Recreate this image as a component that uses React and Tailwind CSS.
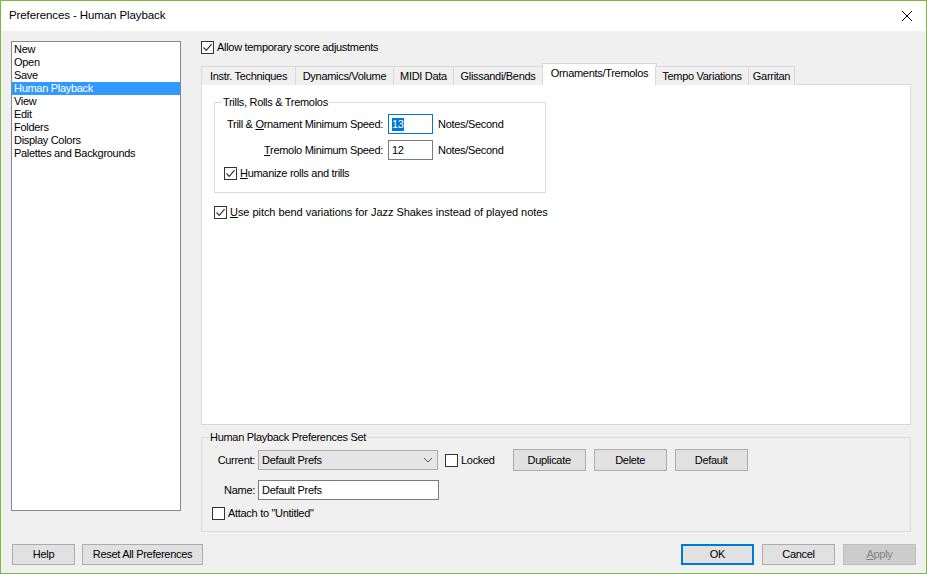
import React from "react";

const font = { fontFamily: '"Liberation Sans", Arial, sans-serif' };

const Check = ({ checked, className = "" }) => (
  <span
    className={`inline-flex h-[13px] w-[13px] shrink-0 items-center justify-center border border-[#333333] bg-white ${className}`}
  >
    {checked && (
      <svg width="11" height="11" viewBox="0 0 11 11">
        <path d="M1.5 5.5 L4.2 8.3 L9.6 2.2" fill="none" stroke="#333333" strokeWidth="1.2" />
      </svg>
    )}
  </span>
);

const CheckRow = ({ checked, children, className = "" }) => (
  <div className={`flex h-[13px] items-center gap-[3px] whitespace-nowrap ${className}`}>
    <Check checked={checked} />
    <span className="leading-[13px]">{children}</span>
  </div>
);

// skin: border + background + text colour of the button
const Btn = ({
  children,
  className = "",
  w = "w-[73px]",
  h = "h-[21px]",
  skin = "border border-[#adadad] bg-[#e1e1e1] text-black",
}) => (
  <button
    type="button"
    className={`flex ${h} ${w} shrink-0 items-center justify-center whitespace-nowrap leading-none ${skin} ${className}`}
  >
    {children}
  </button>
);

const tabs = [
  { label: "Instr. Techniques", w: "w-[95px]" },
  { label: "Dynamics/Volume", w: "w-[99px]" },
  { label: "MIDI Data", w: "w-[61px]" },
  { label: "Glissandi/Bends", w: "w-[90px]" },
  { label: "Ornaments/Tremolos", w: "w-[115px]", active: true },
  { label: "Tempo Variations", w: "w-[94px]" },
  { label: "Garritan", w: "w-[47px]" },
];

const items = [
  "New",
  "Open",
  "Save",
  "Human Playback",
  "View",
  "Edit",
  "Folders",
  "Display Colors",
  "Palettes and Backgrounds",
];

export default function App() {
  return (
    <div
      className="flex h-[574px] w-[927px] flex-col border border-[#7fba3c] text-[11px] tracking-[-0.3px] text-black"
      style={font}
    >
      {/* title bar */}
      <div className="flex h-[30px] shrink-0 items-center justify-between bg-white pl-[8px] pr-[13px]">
        <span className="text-[11.5px] tracking-[-0.1px]">Preferences - Human Playback</span>
        <svg width="12" height="12" viewBox="0 0 12 12">
          <path d="M1 1 L11 11 M11 1 L1 11" stroke="#000" strokeWidth="1" />
        </svg>
      </div>

      {/* body */}
      <div className="flex flex-1 flex-col bg-[#f0f0f0]">
        <div className="flex pl-[10px] pr-[14px] pt-[10px]">
          {/* list */}
          <div className="h-[470px] w-[170px] shrink-0 border border-[#828790] bg-white pt-[1px]">
            {items.map((it) => (
              <div
                key={it}
                className={`h-[13px] pl-[2px] leading-[13px] ${
                  it === "Human Playback" ? "bg-[#3399ff] text-white" : ""
                }`}
              >
                {it}
              </div>
            ))}
          </div>

          {/* right column */}
          <div className="ml-[20px] flex w-[710px] flex-col">
            <CheckRow checked>Allow temporary score adjustments</CheckRow>

            {/* tabs */}
            <div className="relative z-10 mt-[9px] -mb-[1px] flex h-[22px] items-end">
              {tabs.map((t) => (
                <div
                  key={t.label}
                  className={`${t.w} flex shrink-0 items-center justify-center whitespace-nowrap border border-b-0 border-[#d9d9d9] ${
                    t.active
                      ? "-ml-[1px] -mr-[1px] h-[22px] bg-white pb-[2px]"
                      : "-ml-[1px] h-[19px] bg-[#f0f0f0] first:ml-0"
                  }`}
                >
                  {t.label}
                </div>
              ))}
            </div>

            {/* tab panel */}
            <div className="h-[341px] border border-[#d9d9d9] bg-white pl-[12px] pt-[17px]">
              <div className="relative h-[91px] w-[332px] border border-[#dcdcdc] px-[9px] pt-[11px]">
                <span className="absolute -top-[7px] left-[7px] whitespace-nowrap bg-white px-[1px] leading-[13px]">
                  Trills, Rolls &amp; Tremolos
                </span>
                <div className="flex items-center">
                  <span className="w-[159px] whitespace-nowrap text-right">
                    Trill &amp; <u>O</u>rnament Minimum Speed:
                  </span>
                  <div className="ml-[5px] flex h-[20px] w-[45px] items-center border border-[#0078d7] bg-white pl-[3px]">
                    <span className="bg-[#0078d7] leading-[13px] text-white">13</span>
                  </div>
                  <span className="ml-[5px]">Notes/Second</span>
                </div>
                <div className="mt-[6px] flex items-center">
                  <span className="w-[159px] whitespace-nowrap text-right">
                    <u>T</u>remolo Minimum Speed:
                  </span>
                  <div className="ml-[5px] flex h-[20px] w-[45px] items-center border border-[#7a7a7a] bg-white pl-[3px]">
                    12
                  </div>
                  <span className="ml-[5px]">Notes/Second</span>
                </div>
                <CheckRow checked className="mt-[7px]">
                  <u>H</u>umanize rolls and trills
                </CheckRow>
              </div>
              <CheckRow checked className="mt-[13px] tracking-[-0.05px]">
                <u>U</u>se pitch bend variations for Jazz Shakes instead of played notes
              </CheckRow>
            </div>

            {/* preferences set group */}
            <div className="relative mt-[12px] h-[95px] border border-[#dcdcdc] pl-[10px] pt-[11px]">
              <span className="absolute -top-[7px] left-[7px] whitespace-nowrap bg-[#f0f0f0] px-[1px] leading-[13px]">
                Human Playback Preferences Set
              </span>
              <div className="flex items-center">
                <span className="w-[43px] text-right">Current:</span>
                <div className="ml-[3px] flex h-[20px] w-[180px] items-center justify-between border border-[#adadad] bg-[#e5e5e5] pl-[3px] pr-[4px]">
                  <span>Default Prefs</span>
                  <svg width="10" height="6" viewBox="0 0 10 6">
                    <path d="M1 1 L5 5 L9 1" fill="none" stroke="#555" strokeWidth="1" />
                  </svg>
                </div>
                <CheckRow className="ml-[7px]">Locked</CheckRow>
                <Btn h="h-[22px]" className="ml-[18px]">Duplicate</Btn>
                <Btn h="h-[22px]" className="ml-[8px]">Delete</Btn>
                <Btn h="h-[22px]" className="ml-[8px]">Default</Btn>
              </div>
              <div className="mt-[9px] flex items-center">
                <span className="w-[43px] text-right">Name:</span>
                <div className="ml-[3px] flex h-[20px] w-[181px] items-center border border-[#7a7a7a] bg-white pl-[3px]">
                  Default Prefs
                </div>
              </div>
              <CheckRow className="mt-[7px]">Attach to "Untitled"</CheckRow>
            </div>
          </div>
        </div>

        {/* bottom buttons */}
        <div className="mt-[12px] flex items-center pl-[11px] pr-[10px]">
          <Btn w="w-[63px]">Help</Btn>
          <Btn w="w-[121px]" className="ml-[7px]">
            Reset All Preferences
          </Btn>
          <div className="flex-1" />
          <Btn skin="border-2 border-[#0078d7] bg-[#e1e1e1] text-black">OK</Btn>
          <Btn className="ml-[8px]">Cancel</Btn>
          <Btn className="ml-[8px]" skin="border border-[#bfbfbf] bg-[#cccccc] text-[#838383]">
            <u>A</u>pply
          </Btn>
        </div>
      </div>
    </div>
  );
}
